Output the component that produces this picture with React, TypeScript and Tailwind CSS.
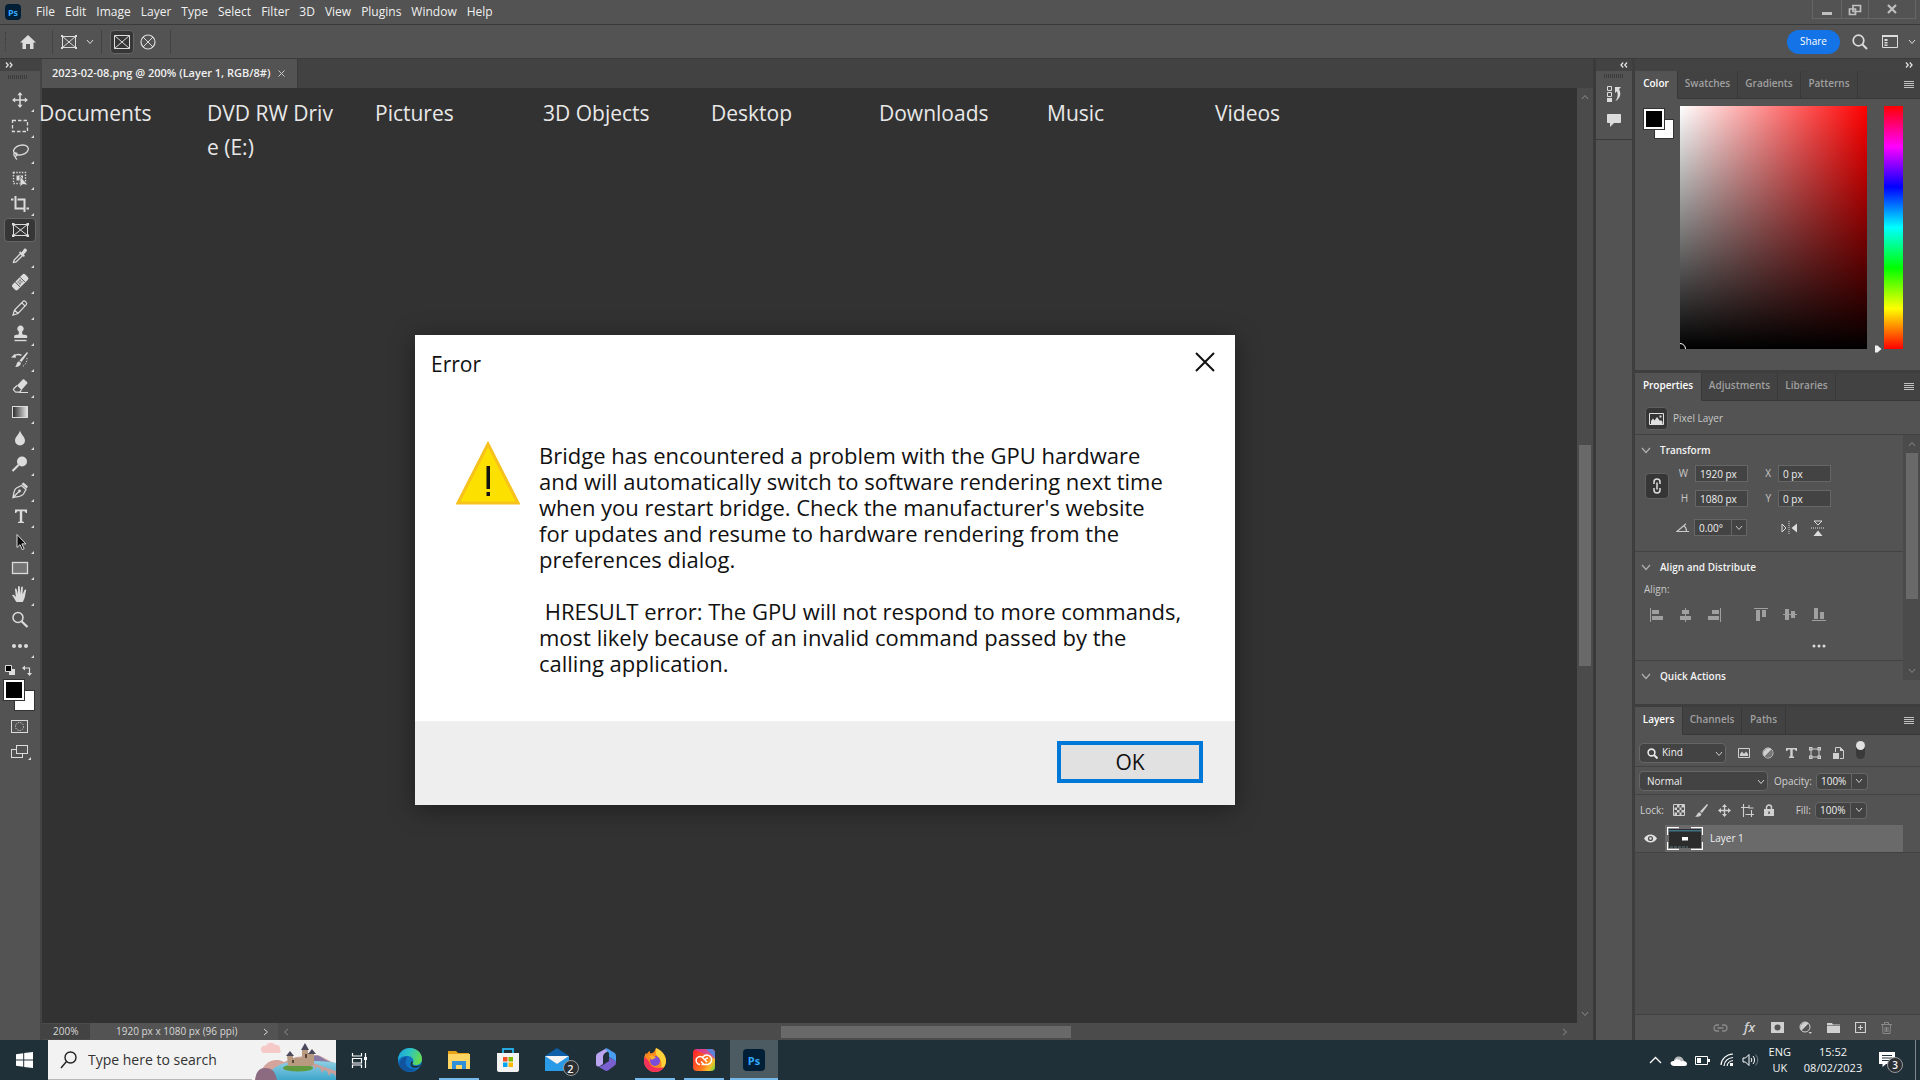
import React, { useState } from 'react';

type IconProps = { children: React.ReactNode; w?: number; h?: number; className?: string };

const Svg = ({ children, w = 20, h = 20, className = '' }: IconProps) => (
  <svg width={w} height={h} viewBox={`0 0 ${w} ${h}`} fill="none" className={`shrink-0 ${className}`} aria-hidden="true">
    {children}
  </svg>
);

const Chevron = ({ className = '' }: { className?: string }) => (
  <Svg w={8} h={6} className={className}>
    <path d="M1 1l3 3.5L7 1" stroke="currentColor" />
  </Svg>
);

const DoubleArrow = ({ flip = false }: { flip?: boolean }) => (
  <Svg w={8} h={6} className={flip ? 'rotate-180' : ''}>
    <path d="M1 .5L3.2 3 1 5.5M4.8.5L7 3 4.8 5.5" stroke="#e0e0e0" strokeWidth="1.3" />
  </Svg>
);

const FrameIcon = () => (
  <Svg w={18} h={16}>
    <path d="M2.5 2.5h13v11h-13zM2.5 2.5l13 11M15.5 2.5l-13 11" stroke="currentColor" />
    <path d="M1 1h2v2H1zM15 1h2v2h-2zM1 13h2v2H1zM15 13h2v2h-2z" fill="currentColor" />
  </Svg>
);

const Grip = () => (
  <div className="h-1 w-5 bg-[repeating-linear-gradient(90deg,#3c3c3c_0_1px,transparent_1px_2px)]" />
);

const tools: { name: string; noCorner?: boolean; icon: React.ReactNode }[] = [
  {
    name: 'Move',
    icon: (
      <>
        <path d="M10 3v14M3 10h14" stroke="currentColor" strokeWidth="1.5" />
        <path d="M10 2l2.600 3.200H7.400zM10 18l2.600-3.200H7.400zM2 10l3.200-2.600v5.200zM18 10l-3.200-2.600v5.200z" fill="currentColor" />
      </>
    ),
  },
  { name: 'Marquee', icon: <path d="M2.5 4.5h15v11h-15z" stroke="currentColor" strokeWidth="1.3" strokeDasharray="3.5 2" /> },
  {
    name: 'Lasso',
    icon: (
      <>
        <ellipse cx="11" cy="8" rx="7.5" ry="4.8" transform="rotate(-14 11 8)" stroke="currentColor" strokeWidth="1.3" />
        <circle cx="5.5" cy="12.5" r="1.7" stroke="currentColor" strokeWidth="1.2" />
        <path d="M5 14c.2 2 1 2.500 2 3.500" stroke="currentColor" strokeWidth="1.3" />
      </>
    ),
  },
  {
    name: 'Object Selection',
    icon: (
      <>
        <path d="M3.5 4.5h12v11h-12z" stroke="currentColor" strokeWidth="1.4" strokeDasharray="1.4 1.4" />
        <path d="M6.5 7.5H13v5H6.5z" fill="currentColor" />
        <path d="M10 8v11l2.500-2.500 5.500.5z" fill="currentColor" stroke="#535353" strokeWidth=".8" />
      </>
    ),
  },
  {
    name: 'Crop',
    icon: <path d="M5.5 2v12.500H14M1 5.500h2.500M7.500 5.500h7V18M16.500 14.500H19" stroke="currentColor" strokeWidth="2" />,
  },
  {
    name: 'Frame',
    noCorner: true,
    icon: (
      <>
        <path d="M3.5 4.500h14v11h-14zM3.500 4.500l14 11M17.500 4.500l-14 11" stroke="currentColor" />
        <path d="M2 3h2.500v2.500H2zM16.500 3H19v2.500h-2.500zM2 14.500h2.500V17H2zM16.500 14.500H19V17h-2.500z" fill="currentColor" />
      </>
    ),
  },
  {
    name: 'Eyedropper',
    icon: (
      <>
        <path d="M3.500 16.500l.6-2.500 6.500-6.500 2 2-6.500 6.500z" stroke="currentColor" strokeWidth="1.3" />
        <path d="M9 6.500l1.200-1.200 1.300 1.200L14 3c1.500-1.500 4 .8 2.500 2.500L13.800 8.500l1.200 1.300L13.800 11z" fill="currentColor" />
      </>
    ),
  },
  {
    name: 'Healing Brush',
    icon: (
      <>
        <rect x="1" y="6.5" width="18" height="7.5" rx="2" transform="rotate(-45 10 10)" fill="currentColor" />
        <path d="M5.200 10l4.800 4.800M10 5.200l4.800 4.800" stroke="#535353" />
        <path d="M10 7.500v1.400M12.500 10h-1.400M10 12.500v-1.400M7.500 10h1.400M10 9.600v.9" stroke="#535353" strokeWidth="1.2" />
      </>
    ),
  },
  {
    name: 'Pencil',
    icon: (
      <path d="M3 17l1.500-5L13.500 3c1-.8 4 2 3 3.300L8 15.500zM4.500 12L8 15.500M11.800 4.800l3.400 3.400" stroke="currentColor" strokeWidth="1.2" />
    ),
  },
  {
    name: 'Clone Stamp',
    icon: (
      <>
        <path d="M8.800 10V7.500a3.200 3.200 0 1 1 3.400 0V10c0 .8 5 .8 5 1.800V14h-13v-2.200c0-1 4.600-1 4.600-1.800z" fill="currentColor" />
        <path d="M4.500 16.500h12" stroke="currentColor" strokeWidth="1.4" />
      </>
    ),
  },
  {
    name: 'History Brush',
    icon: (
      <>
        <path d="M17 2l1 1-6.500 9-2-1.500zM9 11.200l2 1.800c-.5 3-3 4-6 4 2-1.500 1-4.500 4-5.800z" fill="currentColor" />
        <path d="M4 6c2.500-1.800 5-1.800 7.500-.6" stroke="currentColor" strokeWidth="1.4" />
        <path d="M1 7.500l4-3.700 1 4z" fill="currentColor" />
        <path d="M17 8c.4 3.500-1.500 7-4.500 8.500" stroke="currentColor" strokeDasharray="1.2 1.6" />
      </>
    ),
  },
  {
    name: 'Eraser',
    icon: (
      <>
        <path d="M7 9.500l5.500-5.800c.6-.6 1.400-.6 2 0l2.500 2.300c.6.600.6 1.200 0 1.800L11.500 14z" fill="currentColor" />
        <path d="M7 9.500l-3 3c-.7.7-.7 1.300 0 1.900l1.700 1.700h3.800l2-2.100M9 16.500h9" stroke="currentColor" strokeWidth="1.2" />
      </>
    ),
  },
  {
    name: 'Gradient',
    icon: (
      <>
        <defs>
          <linearGradient id="toolGradient">
            <stop stopColor="#2a2a2a" />
            <stop offset="1" stopColor="#e8e8e8" />
          </linearGradient>
        </defs>
        <rect x="2.5" y="4.5" width="15" height="11" fill="url(#toolGradient)" stroke="currentColor" />
      </>
    ),
  },
  { name: 'Blur', icon: <path d="M10 2.500c1 4 5 6.500 5 10a5 5 0 0 1-10 0c0-3.500 4-6 5-10z" fill="currentColor" /> },
  {
    name: 'Dodge',
    icon: (
      <>
        <circle cx="12" cy="7.5" r="5" fill="currentColor" />
        <path d="M8.500 11L2.500 17" stroke="currentColor" strokeWidth="2.2" />
      </>
    ),
  },
  {
    name: 'Pen',
    icon: (
      <>
        <path d="M3 17.500c1-4 .5-7.500 3.500-9.500l5-2.500 4.500 4-2.500 4.500c-2 3-6.500 2.500-10.500 3.500zM3.500 17l5.500-5.500" stroke="currentColor" strokeWidth="1.3" />
        <circle cx="9.5" cy="11" r="1.4" fill="currentColor" />
        <path d="M11.500 4l2-1.500 4.500 4-1.500 2z" fill="currentColor" />
      </>
    ),
  },
  {
    name: 'Type',
    icon: <path d="M5 3.500h12V7h-1.300c-.3-1.200-.8-1.700-2.200-1.700h-1.300v9.400c0 .9.500 1.100 1.800 1.200v1.100H8v-1.100c1.300-.1 1.800-.3 1.800-1.200V5.300H8.500C7.100 5.300 6.600 5.800 6.300 7H5z" fill="currentColor" />,
  },
  {
    name: 'Path Selection',
    icon: <path d="M7 2.500v13l3-2.800 2.300 5 1.900-1-2.300-4.800h4z" fill="#0d0d0d" stroke="currentColor" />,
  },
  { name: 'Rectangle', icon: <rect x="2.5" y="4.5" width="15" height="11" fill="#757575" stroke="currentColor" strokeWidth="1.3" /> },
  {
    name: 'Hand',
    icon: (
      <path
        d="M6.500 18C5 16 3.500 13 2 11.200c.8-1 2-.6 3 .8l.9 1L5 5.500c-.1-1.200 1.500-1.300 1.700-.1L7.800 10 8 3c0-1.200 1.700-1.200 1.800 0l.4 7 1-6.700c.2-1.200 1.800-1 1.700.2L12.500 10.500l2-4.500c.5-1 2-.5 1.600.6-1 3.400-.8 7-2.600 10l-.7 1.400z"
        fill="currentColor"
      />
    ),
  },
  {
    name: 'Zoom',
    noCorner: true,
    icon: (
      <>
        <circle cx="8" cy="7.5" r="5" stroke="currentColor" strokeWidth="1.5" />
        <path d="M11.800 11.500l5.700 5.500" stroke="currentColor" strokeWidth="2.3" />
      </>
    ),
  },
  {
    name: 'More Tools',
    icon: (
      <>
        <circle cx="4" cy="10" r="2" fill="currentColor" />
        <circle cx="10" cy="10" r="2" fill="currentColor" />
        <circle cx="16" cy="10" r="2" fill="currentColor" />
      </>
    ),
  },
];

const Toolbar = () => {
  const [active, setActive] = useState('Frame');

  return (
    <aside className="flex w-[42px] shrink-0 flex-col border-r-2 border-[#434343] bg-[#535353] text-[#dcdcdc]">
      <div className="flex h-3 items-center bg-[#434343] pl-[5px]">
        <DoubleArrow />
      </div>
      <div className="flex h-[17px] items-start pt-1 pl-2">
        <Grip />
      </div>
      <div className="flex flex-col items-center gap-0.5">
        {tools.map((tool) => (
          <button
            key={tool.name}
            aria-label={tool.name}
            onClick={() => setActive(tool.name)}
            className={`relative flex h-6 w-8 items-center justify-center rounded-sm border ${
              active === tool.name ? 'border-[#666] bg-[#363636]' : 'border-transparent'
            }`}
          >
            <Svg>{tool.icon}</Svg>
            {!tool.noCorner && (
              <Svg w={3} h={3} className="absolute right-px -bottom-px">
                <path d="M3 0v3H0z" fill="currentColor" />
              </Svg>
            )}
          </button>
        ))}
      </div>
      <div className="flex justify-between pt-[7px] pr-[7px] pl-[5px]">
        <Svg w={11} h={11}>
          <path d="M4 4h6v6H4z" fill="#dcdcdc" />
          <path d="M.5.5h6v6h-6z" fill="#000" stroke="#dcdcdc" />
        </Svg>
        <Svg w={11} h={11}>
          <path d="M2 3h5.500v6" stroke="#dcdcdc" strokeWidth="1.2" />
          <path d="M0 3l3-2.500v5zM7.500 11L5 8h5z" fill="#dcdcdc" />
        </Svg>
      </div>
      <div className="relative mt-1 ml-1 h-[31px] w-[31px]">
        <button aria-label="Background color" className="absolute right-0 bottom-0 h-[21px] w-[21px] border border-[#333] bg-white" />
        <button aria-label="Foreground color" className="absolute top-0 left-0 h-5 w-5 border-2 border-white bg-black outline outline-[#333]" />
      </div>
      <button aria-label="Quick mask" className="mt-1.5 ml-2.5">
        <Svg w={20} h={18}>
          <rect x="1.5" y="3.5" width="16" height="12" stroke="currentColor" />
          <circle cx="9.5" cy="9.5" r="4" stroke="currentColor" strokeDasharray="1.2 1.2" />
        </Svg>
      </button>
      <button aria-label="Screen mode" className="mt-2 ml-2.5">
        <Svg w={22} h={20}>
          <rect x="1.5" y="6.5" width="11" height="8" stroke="currentColor" />
          <rect x="6.5" y="2.5" width="11" height="8" fill="#535353" stroke="currentColor" />
          <path d="M21 14v3h-3z" fill="currentColor" />
        </Svg>
      </button>
    </aside>
  );
};

const menus = ['File', 'Edit', 'Image', 'Layer', 'Type', 'Select', 'Filter', '3D', 'View', 'Plugins', 'Window', 'Help'];

const TitleBar = () => (
  <header className="flex h-[25px] items-start border-b border-[#3a3a3a] bg-[#535353]">
    <div className="mt-1 ml-[5px] flex h-4 w-4 items-center justify-center rounded-sm bg-[#001e36] text-[9px] leading-none font-bold text-[#31a8ff]">Ps</div>
    <nav className="ml-[15px] flex h-6 flex-1 items-center gap-2.5 text-xs text-[#f0f0f0]">
      {menus.map((m) => (
        <button key={m}>{m}</button>
      ))}
    </nav>
    <div className="mr-1 flex h-[19px] border border-t-0 border-[#666] text-[#c0c0c0]">
      <button aria-label="Minimize" className="flex w-7 items-center justify-center">
        <Svg w={12} h={14}><path d="M1 10h10v3H1z" fill="currentColor" /></Svg>
      </button>
      <button aria-label="Restore" className="flex w-7 items-center justify-center border-x border-[#666] pt-0.5">
        <Svg w={14} h={12}>
          <path d="M5 1.500h7.500v6H5zM1.500 5h6v5.500h-6z" fill="#535353" stroke="currentColor" strokeWidth="1.7" />
        </Svg>
      </button>
      <button aria-label="Close" className="flex w-[46px] items-center justify-center">
        <Svg w={10} h={10}><path d="M1 1l8 8M9 1L1 9" stroke="currentColor" strokeWidth="2.2" /></Svg>
      </button>
    </div>
  </header>
);

const OptionsBar = () => (
  <div className="flex h-[34px] items-center border-b border-[#3a3a3a] bg-[#535353] text-[#dcdcdc]">
    <div className="ml-[5px] h-5 w-px border-l border-dotted border-[#3a3a3a]" />
    <button aria-label="Home" className="mr-3 ml-2.5 flex w-6 justify-center">
      <Svg w={18} h={16}><path d="M9 1l8 7.500h-2.500V15H11v-5H7v5H3.500V8.500H1z" fill="currentColor" /></Svg>
    </button>
    <div className="h-6 w-px bg-[#434343]" />
    <button aria-label="Tool preset" className="flex w-12 items-center justify-center gap-2">
      <FrameIcon />
      <Chevron />
    </button>
    <div className="h-6 w-px bg-[#434343]" />
    <button aria-label="Rectangular frame" className="ml-2 flex h-6 w-6 items-center justify-center rounded-sm border border-[#666] bg-[#363636]">
      <Svg w={16} h={14}><path d="M.5.5h15v13H.5zM.5.5l15 13M15.500.5l-15 13" stroke="currentColor" /></Svg>
    </button>
    <button aria-label="Elliptical frame" className="ml-1.5">
      <Svg w={16} h={16}>
        <circle cx="8" cy="8" r="7" stroke="currentColor" strokeWidth="1.2" />
        <path d="M3 3l10 10M13 3L3 13" stroke="currentColor" />
      </Svg>
    </button>
    <div className="ml-3.5 h-6 w-px bg-[#434343]" />
    <div className="flex-1" />
    <button className="h-6 w-[53px] rounded-full bg-[#1473e6] text-[10px] text-white">Share</button>
    <button aria-label="Search" className="ml-3">
      <Svg w={16} h={16}>
        <circle cx="6.5" cy="6.5" r="5.3" stroke="currentColor" strokeWidth="1.7" />
        <path d="M10.500 10.500l4.500 4.500" stroke="currentColor" strokeWidth="2" />
      </Svg>
    </button>
    <button aria-label="Workspace" className="ml-3.5 flex items-center gap-2.5 pr-1">
      <Svg w={16} h={13}>
        <path d="M.5 1h15v11.500H.5z" stroke="currentColor" />
        <path d="M0 0h16v2H0zM2.500 4h3v2h-3zM2.500 7h3v1.500h-3zM2.500 9.500h3V11h-3z" fill="currentColor" />
      </Svg>
      <Chevron />
    </button>
  </div>
);

const folders = ['Documents', 'DVD RW Driv\ne (E:)', 'Pictures', '3D Objects', 'Desktop', 'Downloads', 'Music', 'Videos'];

const ErrorDialog = () => (
  <section role="dialog" aria-label="Error" className="mt-[171px] ml-[373px] w-[820px] bg-white text-[21px] text-[#111] shadow-[0_4px_24px_rgba(0,0,0,0.4)]">
    <div className="flex h-[104px] items-start justify-between pt-3.5 pr-[18px] pl-4">
      <h1 className="leading-[30px]">Error</h1>
      <button aria-label="Close dialog" className="p-0.5">
        <Svg w={20} h={22}><path d="M1 2l18 18M19 2L1 20" stroke="#111" strokeWidth="2" /></Svg>
      </button>
    </div>
    <div className="flex h-[282px] gap-[19px] pl-[41px]">
      <Svg w={64} h={66} className="mt-0.5">
        <path d="M32 3L62 62H2z" fill="#fce100" stroke="#f8c21c" strokeWidth="3" />
        <path d="M30.500 25h3.500v23h-3.500zM30.500 51h3.500v4h-3.500z" fill="#111" />
      </Svg>
      <p className="mt-[3px] text-[22px] leading-[26px] whitespace-pre">
        {`Bridge has encountered a problem with the GPU hardware
and will automatically switch to software rendering next time
when you restart bridge. Check the manufacturer's website
for updates and resume to hardware rendering from the
preferences dialog.

 HRESULT error: The GPU will not respond to more commands,
most likely because of an invalid command passed by the
calling application.`}
      </p>
    </div>
    <div className="flex h-[84px] items-start justify-end bg-[#eee] pt-5 pr-8">
      <button className="h-[42px] w-[146px] border-4 border-[#0078d7] bg-[#e1e1e1] pt-0.5">OK</button>
    </div>
  </section>
);

const Document = () => (
  <main className="flex min-w-0 flex-1 flex-col border-r-[3px] border-[#3a3a3a] bg-[#323232]">
    <div className="flex h-[29px] shrink-0 bg-[#424242]">
      <div className="flex items-center gap-2 border-r border-[#3a3a3a] bg-[#535353] pr-3 pl-2.5">
        <span className="text-[11px] font-semibold whitespace-nowrap text-[#f0f0f0]">2023-02-08.png @ 200% (Layer 1, RGB/8#)</span>
        <button aria-label="Close tab">
          <Svg w={7} h={7}><path d="M.5.5l6 6M6.500.5l-6 6" stroke="#c8c8c8" /></Svg>
        </button>
      </div>
    </div>
    <div className="flex min-h-0 flex-1">
      <div className="min-w-0 flex-1 pt-2">
        <ul className="-ml-[3px] flex h-[68px] text-[21px] leading-[34px] text-[#e8e8e8]">
          {folders.map((f) => (
            <li key={f} className="w-[168px] shrink-0 whitespace-pre">{f}</li>
          ))}
        </ul>
        <ErrorDialog />
      </div>
      <div className="flex w-4 flex-col items-center justify-between bg-[#4b4b4b] py-1.5 text-[#8a8a8a]">
        <Chevron className="rotate-180" />
        <div className="h-[221px] w-3 bg-[#696969]" />
        <Chevron />
      </div>
    </div>
    <div className="flex h-[17px] shrink-0 items-center bg-[#4b4b4b] text-[10px] text-[#d8d8d8]">
      <span className="w-12 bg-[#434343] pl-[11px]">200%</span>
      <span className="flex h-full w-[188px] items-center justify-between bg-[#535353] pr-2 pl-[26px]">
        1920 px x 1080 px (96 ppi)
        <Chevron className="-rotate-90" />
      </span>
      <Chevron className="ml-1 rotate-90 text-[#8a8a8a]" />
      <div className="flex h-full flex-1 items-center justify-center">
        <div className="h-3 w-[290px] bg-[#696969]" />
      </div>
      <Chevron className="mr-6 -rotate-90 text-[#8a8a8a]" />
    </div>
  </main>
);

const PanelTabs = ({ tabs, widths }: { tabs: string[]; widths: string[] }) => (
  <div className="flex h-7 shrink-0 bg-[#424242] text-[10px] font-semibold text-[#a0a0a0]">
    {tabs.map((t, i) => (
      <button
        key={t}
        className={`${widths[i]} flex items-center justify-center border-r border-b border-r-[#383838] pb-0.5 ${
          i === 0 ? 'border-b-[#535353] bg-[#535353] text-white' : 'border-b-[#383838]'
        }`}
      >
        {t}
      </button>
    ))}
    <div className="flex flex-1 items-center justify-end border-b border-[#383838] pr-1.5">
      <button aria-label={`${tabs[0]} panel menu`}>
        <Svg w={10} h={8}><path d="M0 .5h10M0 2.500h10M0 4.500h10M0 6.500h10" stroke="#c0c0c0" /></Svg>
      </button>
    </div>
  </div>
);

const ColorPanel = () => (
  <section className="flex h-[299px] shrink-0 flex-col">
    <PanelTabs tabs={['Color', 'Swatches', 'Gradients', 'Patterns']} widths={['w-[43px]', 'w-[60px]', 'w-[63px]', 'w-[57px]']} />
    <div className="flex pt-[7px] pl-[9px]">
      <div className="relative mt-[3px] h-[30px] w-[30px]">
        <button aria-label="Background swatch" className="absolute right-0 bottom-0 h-5 w-5 border border-[#333] bg-white" />
        <button aria-label="Foreground swatch" className="absolute top-0 left-0 h-5 w-5 border-2 border-white bg-black outline outline-[#333]" />
      </div>
      <div className="relative ml-[6px] h-[243px] w-[187px] overflow-hidden bg-[linear-gradient(to_top,#000,transparent),linear-gradient(to_right,#fff,#f00)]">
        <div className="absolute -bottom-1.5 -left-1.5 h-3 w-3 rounded-full border border-white" />
      </div>
      <div className="flex items-end pl-[7px]">
        <Svg w={8} h={8} className="-mb-1"><path d="M1 .5h2.500L7.500 4 3.500 7.500H1z" fill="#f0f0f0" /></Svg>
        <div className="ml-0.5 h-[243px] w-[19px] bg-[linear-gradient(#f00,#f0f,#00f,#0ff,#0f0,#ff0,#f00)]" />
      </div>
    </div>
  </section>
);

const Field = ({ label, value }: { label: string; value: string }) => (
  <label className="flex items-center justify-end gap-[7px]">
    {label}
    <input defaultValue={value} className="h-[17px] w-[53px] border border-[#666] bg-[#434343] pl-1 text-[#f0f0f0]" />
  </label>
);

const PercentField = ({ label, value, id }: { label: string; value: string; id: string }) => (
  <div className="flex items-center">
    <label htmlFor={id} className="pr-1">{label}</label>
    <input id={id} defaultValue={value} className="h-[17px] w-9 rounded-l-sm border border-[#666] bg-[#434343] pl-1 text-[#f0f0f0]" />
    <button aria-label={`${label} presets`} className="flex h-[17px] w-4 items-center justify-center rounded-r-sm border border-l-0 border-[#666] bg-[#434343]">
      <Chevron />
    </button>
  </div>
);

const SectionTitle = ({ children }: { children: React.ReactNode }) => (
  <h2 className="flex h-[30px] items-center gap-[9px] pl-[6px] font-semibold text-[#f4f4f4]">
    <Svg w={10} h={7} className="text-[#b0b0b0]"><path d="M1 1l4 4.500L9 1" stroke="currentColor" strokeWidth="1.2" /></Svg>
    {children}
  </h2>
);

const alignIcons = [
  'M0 0h1v14H0zM2 2h7v4H2zM2 8h11v4H2z',
  'M6 0h1v14H6zM3 2h7v4H3zM1 8h11v4H1z',
  'M12 0h1v14h-1zM4 2h7v4H4zM0 8h11v4H0z',
  'M0 0h14v1H0zM2 2h4v11H2zM8 2h4v7H8z',
  'M0 6h14v1H0zM2 1h4v11H2zM8 3h4v7H8z',
  'M0 12h14v1H0zM2 0h4v11H2zM8 4h4v7H8z',
];

const PropertiesPanel = () => (
  <section className="flex h-[334px] shrink-0 flex-col border-t-[3px] border-[#3e3e3e] text-[10px] text-[#c8c8c8]">
    <PanelTabs tabs={['Properties', 'Adjustments', 'Libraries']} widths={['w-[67px]', 'w-[76px]', 'w-[58px]']} />
    <div className="flex h-[34px] shrink-0 items-center gap-[5px] border-b border-[#414141] pt-0.5 pl-2.5">
      <span className="flex h-[23px] w-[23px] items-center justify-center rounded-sm border border-[#606060] bg-[#363636]">
        <Svg w={15} h={12}>
          <path d="M.5.5h14v11H.5z" stroke="#e0e0e0" />
          <path d="M2 11V8l2-2.500 1.500 2L8 4l3 4 1-1 1.500 2v2z" fill="#e0e0e0" />
          <path d="M10.500 2.500h2v2h-2z" fill="#e0e0e0" />
        </Svg>
      </span>
      Pixel Layer
    </div>
    <div className="flex min-h-0 flex-1">
      <div className="flex-1">
        <div className="h-[117px] border-b border-[#434343]">
          <SectionTitle>Transform</SectionTitle>
          <div className="flex">
            <button aria-label="Link dimensions" className="mt-2 ml-2.5 flex h-[26px] w-6 items-center justify-center rounded-sm border border-[#606060] bg-[#363636]">
              <Svg w={10} h={16}>
                <path d="M2 6V4a3 3 0 0 1 6 0v2M2 10v2a3 3 0 0 0 6 0v-2M5 4.500v7" stroke="#e0e0e0" strokeWidth="1.5" />
              </Svg>
            </button>
            <div className="w-[79px] space-y-2">
              <Field label="W" value="1920 px" />
              <Field label="H" value="1080 px" />
            </div>
            <div className="w-[83px] space-y-2">
              <Field label="X" value="0 px" />
              <Field label="Y" value="0 px" />
            </div>
          </div>
          <div className="mt-3 flex items-center pl-[41px]">
            <Svg w={14} h={9}><path d="M13 8.500H1L10 .8M8 3c1.800 1 2.500 3 2.500 5.500" stroke="currentColor" strokeWidth="1.2" /></Svg>
            <input aria-label="Angle" defaultValue="0.00°" className="ml-1 h-[17px] w-[38px] border border-[#666] bg-[#434343] pl-1 text-[#f0f0f0]" />
            <button aria-label="Angle presets" className="flex h-[17px] w-[15px] items-center justify-center border border-l-0 border-[#666] bg-[#434343]">
              <Chevron />
            </button>
            <button aria-label="Flip horizontal" className="ml-[34px]">
              <Svg w={16} h={14}>
                <path d="M1 3l4 4-4 4z" stroke="#dcdcdc" />
                <path d="M8 0v14" stroke="#dcdcdc" strokeDasharray="1 1" />
                <path d="M16 2.500v9L10.500 7z" fill="#dcdcdc" />
              </Svg>
            </button>
            <button aria-label="Flip vertical" className="ml-3.5">
              <Svg w={14} h={16}>
                <path d="M3 1h8L7 5z" stroke="#dcdcdc" />
                <path d="M0 8h14" stroke="#dcdcdc" strokeDasharray="1 1" />
                <path d="M2.500 16h9L7 10.500z" fill="#dcdcdc" />
              </Svg>
            </button>
          </div>
        </div>
        <div className="h-[109px] border-b border-[#434343]">
          <SectionTitle>Align and Distribute</SectionTitle>
          <p className="pl-[9px] leading-[14px]">Align:</p>
          <div className="mt-3 flex gap-[15px] pl-[15px] text-[#a0a0a0]">
            {alignIcons.map((d, i) => (
              <button key={d} aria-label={`Align ${i + 1}`} className={i === 3 ? 'ml-[17px]' : ''}>
                <Svg w={14} h={14}><path d={d} fill="currentColor" /></Svg>
              </button>
            ))}
          </div>
          <button aria-label="More align options" className="mt-[22px] ml-[177px] block">
            <Svg w={14} h={4}>
              <circle cx="2" cy="2" r="1.5" fill="#dcdcdc" />
              <circle cx="7" cy="2" r="1.5" fill="#dcdcdc" />
              <circle cx="12" cy="2" r="1.5" fill="#dcdcdc" />
            </Svg>
          </button>
        </div>
        <SectionTitle>Quick Actions</SectionTitle>
      </div>
      <div className="mb-6 flex w-[17px] flex-col items-center bg-[#4b4b4b] py-1.5 text-[#8a8a8a]">
        <Chevron className="rotate-180" />
        <div className="mt-1.5 mb-auto h-[146px] w-3 bg-[#696969]" />
        <Chevron />
      </div>
    </div>
  </section>
);

const LayersPanel = () => {
  const [visible, setVisible] = useState(true);

  return (
    <section className="flex min-h-0 flex-1 flex-col border-t-[3px] border-[#3e3e3e] text-[10px] text-[#d0d0d0]">
      <PanelTabs tabs={['Layers', 'Channels', 'Paths']} widths={['w-[48px]', 'w-[59px]', 'w-[44px]']} />
      <div className="flex h-8 shrink-0 items-center border-b border-[#434343] pt-1 pl-1">
        <div className="relative">
          <select aria-label="Filter type" className="h-5 w-[87px] appearance-none rounded-sm border border-[#666] bg-[#434343] pl-[22px] text-[#f0f0f0]">
            <option>Kind</option>
          </select>
          <Svg w={11} h={11} className="pointer-events-none absolute top-[5px] left-2">
            <circle cx="4.5" cy="4.5" r="3.4" stroke="#e8e8e8" strokeWidth="1.6" />
            <path d="M7 7l3.500 3.500" stroke="#e8e8e8" strokeWidth="2" />
          </Svg>
          <Chevron className="pointer-events-none absolute top-2 right-[3px]" />
        </div>
        <div className="ml-3 flex items-center gap-3">
          <Svg w={12} h={10}>
            <path d="M.5.5h11v9H.5z" stroke="currentColor" />
            <path d="M2 8V6l2-2.500L6 6l2-2.500L10 6v2z" fill="currentColor" />
          </Svg>
          <Svg w={12} h={12}>
            <circle cx="6" cy="6" r="5" stroke="currentColor" />
            <path d="M9.500 2.500a5 5 0 0 1-7 7z" fill="#777" />
            <path d="M2.500 9.500a5 5 0 0 1 7-7z" fill="currentColor" />
          </Svg>
          <Svg w={11} h={10}><path d="M0 0h11v3H9.800L9 1.600H6.700V8.500H8V10H3V8.500h1.300V1.600H2L1.200 3H0z" fill="currentColor" /></Svg>
          <Svg w={12} h={12}>
            <path d="M2 2h8v8H2z" stroke="currentColor" />
            <path d="M0 0h3.500v3.500H0zM8.500 0H12v3.500H8.500zM0 8.500h3.500V12H0zM8.500 8.500H12V12H8.500z" fill="currentColor" />
            <path d="M1.300 1.300h1v1h-1zM9.700 1.300h1v1h-1zM1.300 9.700h1v1h-1zM9.700 9.700h1v1h-1z" fill="#535353" />
          </Svg>
          <Svg w={11} h={12}>
            <path d="M2.500 5V.5h5l3 3v8H7" stroke="currentColor" />
            <path d="M7 0v4h4zM0 6h6v6H0z" fill="currentColor" />
          </Svg>
          <button aria-label="Toggle filter" className="-mt-1.5 flex h-[18px] w-[9px] items-start rounded-full bg-[#3a3a3a]">
            <span className="block h-[9px] w-[9px] rounded-full bg-[#e0e0e0]" />
          </button>
        </div>
      </div>
      <div className="flex h-7 shrink-0 items-center border-b border-[#434343] pt-px pl-1">
        <div className="relative mr-[6px]">
          <select aria-label="Blend mode" className="h-5 w-[129px] appearance-none rounded-sm border border-[#666] bg-[#434343] pl-[7px] text-[#f0f0f0]">
            <option>Normal</option>
          </select>
          <Chevron className="pointer-events-none absolute top-2 right-[3px]" />
        </div>
        <PercentField id="opacity" label="Opacity:" value="100%" />
      </div>
      <div className="flex h-[30px] shrink-0 items-center pl-[5px]">
        <span className="w-[33px]">Lock:</span>
        <div className="flex flex-1 items-center gap-[10px]">
          <Svg w={12} h={12}>
            <path d="M.5.5h11v11H.5z" stroke="currentColor" />
            <path d="M4 1h2.500v2.500H4zM8.500 1H11v2.500H8.500zM1.500 3.500H4V6H1.500zM6.500 3.500h2V6h-2zM4 6h2.500v2.500H4zM8.500 6H11v2.500H8.500zM1.500 8.500H4V11H1.500zM6.500 8.500h2V11h-2z" fill="currentColor" />
          </Svg>
          <Svg w={13} h={13}><path d="M12 0l1 1-6 8-2-1.500zM4.500 8.300l2 1.600C6 12.500 3 13 0 12.800c2-.8 2-4 4.500-4.500z" fill="currentColor" /></Svg>
          <Svg w={13} h={13}>
            <path d="M6.500 2v9M2 6.500h9" stroke="currentColor" strokeWidth="1.3" />
            <path d="M6.500 0L9 3H4zM6.500 13L9 10H4zM0 6.500L3 4v5zM13 6.500L10 4v5z" fill="currentColor" />
          </Svg>
          <Svg w={13} h={13}><path d="M2.500 0v13M0 3.500h8M4.500 10.500H13M10.500 13V6M8 1v3h4.500" stroke="currentColor" strokeWidth="1.1" /></Svg>
          <Svg w={10} h={12}>
            <path d="M2.500 6V3.500a2.500 2.500 0 0 1 5 0V6" stroke="currentColor" strokeWidth="1.5" />
            <path d="M0 5h10v7H0z" fill="currentColor" />
            <path d="M4.300 7.500h1.500V10H4.300z" fill="#535353" />
          </Svg>
        </div>
        <div className="mr-[53px]">
          <PercentField id="fill" label="Fill:" value="100%" />
        </div>
      </div>
      <div className="flex flex-1 flex-col bg-[#4d4d4d]">
        <div className="flex h-7 items-center border-b border-[#414141] bg-[#535353]">
          <button aria-label="Toggle visibility" onClick={() => setVisible(!visible)} className="flex w-[30px] justify-center">
            {visible && (
              <Svg w={13} h={9}>
                <path d="M0 4.500C3-.8 10-.8 13 4.500c-3 5.300-10 5.300-13 0z" fill="#e0e0e0" />
                <circle cx="6.5" cy="4.5" r="2.6" fill="#535353" />
                <circle cx="6.5" cy="4.5" r="1.2" fill="#e0e0e0" />
              </Svg>
            )}
          </button>
          <div className="mr-[17px] flex h-full flex-1 items-center gap-[7px] bg-[#6a6a6a] pl-0.5 text-[#f0f0f0]">
            <Svg w={36} h={23}>
              <path d="M2 2h32v19H2z" fill="#2c2c2c" />
              <path d="M2 3h32v1.500H2z" fill="#3d7384" />
              <path d="M15 10h6v3.500h-6z" fill="#fff" />
              <path d="M3 20h18" stroke="#5d7780" strokeDasharray="3 1" />
              <path d="M.5 8V.5H12M24 .5h11.500V8M35.500 15v7.500H24M12 22.500H.5V15" stroke="#fff" strokeWidth="1.3" />
            </Svg>
            Layer 1
          </div>
        </div>
      </div>
      <div className="flex h-[26px] shrink-0 items-center justify-end gap-[15px] border-t border-[#414141] pr-7">
        <button aria-label="Link layers">
          <Svg w={15} h={8} className="text-[#8a8a8a]"><path d="M6 1H4a3 3 0 0 0 0 6h2M9 1h2a3 3 0 0 1 0 6H9M4.500 4h6" stroke="currentColor" strokeWidth="1.3" /></Svg>
        </button>
        <button aria-label="Layer style" className="w-[13px] text-[13px] leading-none font-semibold italic">fx</button>
        <button aria-label="Add mask">
          <Svg w={13} h={11}><path d="M0 0h13v11H0z" fill="currentColor" /><circle cx="6.5" cy="5.5" r="3" fill="#535353" /></Svg>
        </button>
        <button aria-label="Adjustment layer">
          <Svg w={13} h={13}>
            <circle cx="6" cy="6" r="5" stroke="currentColor" />
            <path d="M2.500 9.500a5 5 0 0 1 7-7z" fill="currentColor" />
            <path d="M9.500 11H13l-1.800 2z" fill="currentColor" />
          </Svg>
        </button>
        <button aria-label="New group">
          <Svg w={13} h={10}><path d="M0 0h5l1 1.500h7V10H0z" fill="currentColor" /><path d="M0 2.500h13" stroke="#535353" strokeWidth=".6" /></Svg>
        </button>
        <button aria-label="New layer">
          <Svg w={11} h={11}><path d="M.5.5h10v10H.5zM5.500 3v5M3 5.500h5" stroke="currentColor" strokeWidth="1.2" /></Svg>
        </button>
        <button aria-label="Delete layer">
          <Svg w={11} h={12} className="text-[#8a8a8a]"><path d="M0 2.500h11M3.500 2.500v-2h4v2M1.500 2.500l.5 9h7l.5-9M4 5v5M5.500 5v5M7 5v5" stroke="currentColor" /></Svg>
        </button>
      </div>
    </section>
  );
};

const RightDock = () => (
  <div className="flex shrink-0">
    <div className="flex w-[39px] flex-col border-r-[3px] border-[#3e3e3e] bg-[#535353]">
      <div className="flex h-3 items-center justify-end bg-[#434343] pr-1"><DoubleArrow flip /></div>
      <div className="flex h-[69px] flex-col items-center gap-[11px] border-b border-[#3a3a3a] pt-[3px] text-[#dcdcdc]">
        <Grip />
        <button aria-label="History" className="-mt-1">
          <Svg w={16} h={18}>
            <path d="M1.500 1.500h4v4h-4zM1.500 7.500h4v4h-4z" stroke="currentColor" />
            <path d="M1 13h5v4H1z" fill="currentColor" />
            <path d="M9 8V2h6L13 4.200c2.500 4 1.500 9-3.500 11.800 2.300-3.500 2.800-6.500 1.500-9.800z" fill="currentColor" />
          </Svg>
        </button>
        <button aria-label="Comments">
          <Svg w={14} h={13}><path d="M1 0h12c.6 0 1 .4 1 1v7c0 .6-.4 1-1 1H7l-4 4V9H1c-.6 0-1-.4-1-1V1c0-.6.4-1 1-1z" fill="currentColor" /></Svg>
        </button>
      </div>
    </div>
    <div className="flex w-[285px] flex-col bg-[#535353]">
      <div className="flex h-3 items-center justify-end bg-[#434343] pr-[7px]"><DoubleArrow /></div>
      <ColorPanel />
      <PropertiesPanel />
      <LayersPanel />
    </div>
  </div>
);

const taskbarApps = [
  {
    name: 'Task View',
    state: '',
    icon: (
      <>
        <path d="M3.500 5v3h9V5M3.500 20v-3h9v3M3.500 10.500h9V15h-9zM16.500 5v15" stroke="#fff" strokeWidth="1.2" />
        <path d="M15 9h3v3h-3z" fill="#fff" />
      </>
    ),
  },
  {
    name: 'Edge',
    state: '',
    icon: (
      <>
        <defs>
          <linearGradient id="edgeTop" x1="0" y1="0" x2="1" y2=".3">
            <stop stopColor="#1a9fe0" />
            <stop offset=".5" stopColor="#2cc3c4" />
            <stop offset="1" stopColor="#62d957" />
          </linearGradient>
        </defs>
        <circle cx="12" cy="12" r="12" fill="#1173c4" />
        <path d="M0 11C1 3 7 0 12 0c7 0 12 5 12 11 0 4-3 6-6.500 6-2.500 0-3.500-1-2.500-2.500 1.500-2-.5-6.500-5.500-6.500C5 8 1.500 9 0 13z" fill="url(#edgeTop)" />
        <path d="M8 12c-2 5 3 10 10 9-6 5-14.500 2-16.500-4C1 12 5 8.500 9.500 8.500 8.700 9.500 8.300 11 8 12z" fill="#0f549c" />
        <path d="M15 14.500c-1.500 1.500-.5 3.500 2.500 3.500 2 0 4-.5 5.500-1.500-1 2-4 4-8 3-3-1-3-5-1-6.500z" fill="#1f3038" />
      </>
    ),
  },
  {
    name: 'File Explorer',
    state: 'border-b-[#76b9ed]',
    icon: (
      <>
        <path d="M1 3h8l2 2h11v4H1z" fill="#e8a317" />
        <path d="M1 6h22v15H1z" fill="#ffd563" />
        <path d="M5 13h14v8h-4v-4H9v4H5z" fill="#2f8fd8" />
      </>
    ),
  },
  {
    name: 'Store',
    state: '',
    icon: (
      <>
        <path d="M7 5V1h10v4" stroke="#26a9e0" strokeWidth="2" />
        <path d="M1 5h22v17c0 1-1 2-2 2H3c-1 0-2-1-2-2z" fill="#f3f3f3" />
        <path d="M7 9h4.500v4.500H7z" fill="#f25022" />
        <path d="M12.500 9H17v4.500h-4.500z" fill="#7fba00" />
        <path d="M7 14.500h4.500V19H7z" fill="#00a4ef" />
        <path d="M12.500 14.500H17V19h-4.500z" fill="#ffb900" />
      </>
    ),
  },
  {
    name: 'Mail',
    state: '',
    badge: '2',
    icon: (
      <>
        <path d="M0 8l12-8 12 8v15H0z" fill="#0f5ea8" />
        <path d="M0 8l12 8 12-8v15H0z" fill="#2a9be6" />
        <path d="M0 8h24l-12 8z" fill="#f4f4f4" />
      </>
    ),
  },
  {
    name: 'Microsoft 365',
    state: '',
    icon: (
      <>
        <path d="M12 .5L4 5C2.500 6 2 7 2 8.500V16c0 2.500 2 3 4 2l3-2V9c0-2 .8-3 2-4l5-3z" fill="#b9a5f0" />
        <path d="M11 1c1-.6 2-.6 3 0l6 3.500c1.500 1 2 2 2 3.500v8c0-2-.5-3-2-4l-5-3V5z" fill="#4a9df0" />
        <path d="M22 14c0 2-.5 3-2 4l-6 4.500c-1 .6-2 .6-3 0L4 18.500c3 0 4-1 5-1.500l6-4v-3.500l5 2.500c1.500 1 2 1.500 2 2z" fill="#7a5fd0" />
      </>
    ),
  },
  {
    name: 'Firefox',
    state: 'border-b-[#76b9ed]',
    icon: (
      <>
        <path d="M3 5l1 1c1-2 2-3 3-3-.3 1.500 0 2 1 2.500C10 5 12 3.500 13 0c5 2 10 7 10 13 0 6-5 11-11 11S1 19 1 13c0-3 .5-6 2-8z" fill="#ff8a1f" />
        <path d="M13 0c5 2 10 7 10 13 0 4-2 7-5 9 1-5 1-10-3-13-2-2-3-5-2-9z" fill="#ffd43a" />
        <path d="M1 13c0 6 5 11 11 11 4 0 7-1.500 9-5-5 2-12 1-14-3-1-3-2-4-5-7-.7 1-1 2.500-1 4z" fill="#f5305a" />
        <circle cx="12" cy="13" r="5" fill="#7b4ddb" />
        <path d="M6 8c3-1 6 0 7 2-2 0-3 1-4 2z" fill="#ffb02a" />
      </>
    ),
  },
  {
    name: 'Creative Cloud',
    state: 'border-b-[#76b9ed]',
    icon: (
      <>
        <defs>
          <linearGradient id="ccGradient" x1="0" y1=".3" x2="1" y2=".9">
            <stop stopColor="#fb2b2b" />
            <stop offset=".55" stopColor="#ff7a1e" />
            <stop offset=".8" stopColor="#f6c02b" />
            <stop offset="1" stopColor="#74d13b" />
          </linearGradient>
        </defs>
        <rect x="1" y="1" width="22" height="22" rx="4" fill="url(#ccGradient)" />
        <path d="M5 1h14c2 0 4 2 4 4v6C17 7 9 5 3 2c.6-.6 1.200-1 2-1z" fill="#c23bd0" opacity=".6" />
        <path d="M14 1h5c2 0 4 2 4 4v5z" fill="#3b8cf0" opacity=".8" />
        <path d="M8 16.500a4 4 0 1 1 2-7.500l5 5M11 9a4.800 4.800 0 1 1 5 7.500H9.500M9 13.500l3 3M13 12a3 3 0 0 1 3-2" stroke="#fff" strokeWidth="1.5" />
      </>
    ),
  },
];

const SearchArt = () => (
  <svg width="84" height="40" viewBox="0 0 84 40" className="shrink-0" aria-hidden="true">
    <defs>
      <linearGradient id="artWater" x1="0" y1="0" x2="0" y2="1">
        <stop stopColor="#8fd0e4" />
        <stop offset="1" stopColor="#3fa6cb" />
      </linearGradient>
    </defs>
    <rect width="84" height="40" fill="#f2f2f2" />
    <path d="M10 12c-3-4 1-7 4-6 1-4 8-4 9-1 4-1 6 3 5 5 2 2 0 3-2 3H11z" fill="#f5c9c8" />
    <path d="M8 34C12 22 22 17 32 22l12-5 22-2 18 9v16H6z" fill="#d3a39c" />
    <path d="M54 24c6-11 12-10 18-5l12 6v5H54z" fill="#8a7ba6" />
    <path d="M16 40c0-12 14-19 34-19 14 0 26 0 34 2v17z" fill="url(#artWater)" />
    <path d="M3 40c1-8 4-12 10-12 8 0 10 4 12 12z" fill="#8c6a80" />
    <ellipse cx="46" cy="28" rx="15" ry="3.500" fill="#5f9a3f" />
    <path d="M35 15h6v3h9V9h6v4h6v13H36z" fill="#b79a80" />
    <path d="M34 16l4-5 4 5zM49 10l4-7 4 7zM56 14l4-5 4 5z" fill="#4a4a5c" />
    <path d="M61 23l23 8v6l-2-3-3-1-2 3-2-5-3-1-2 3-2-5-3-1-2 2-2-4z" fill="#c99f9c" />
    <path d="M40 20h2v3h-2zM53 14h2v4h-2z" fill="#5a4638" />
  </svg>
);

const Taskbar = () => (
  <footer className="flex h-10 shrink-0 bg-[#1f3038] text-[#f4f4f4]">
    <button aria-label="Start" className="flex w-12 items-center justify-center">
      <Svg w={17} h={16}><path d="M0 2.200l7.200-1V7.500H0zM8.200 1L17 0v7.500H8.200zM0 8.500h7.200v6.300l-7.200-1zM8.200 8.500H17V16l-8.800-1z" fill="#fff" /></Svg>
    </button>
    <label className="flex w-72 items-center border-y border-t-[#f2f2f2] border-b-[#b8b8b8] bg-[#f2f2f2] pl-3">
      <Svg w={17} h={18}>
        <circle cx="10.5" cy="6.5" r="5.5" stroke="#222" strokeWidth="1.4" />
        <path d="M6.500 10.500L1 17" stroke="#222" strokeWidth="1.4" />
      </Svg>
      <input placeholder="Type here to search" className="ml-[11px] w-40 flex-1 text-sm placeholder:text-[#333]" />
      <SearchArt />
    </label>
    <nav className="flex flex-1">
      {taskbarApps.map((app) => (
        <button key={app.name} aria-label={app.name} className="flex w-[49px] justify-center">
          <span className={`relative flex h-10 w-10 items-center justify-center border-y-2 border-t-transparent ${app.state || 'border-b-transparent'}`}>
            <Svg w={24} h={24}>{app.icon}</Svg>
            {app.badge && (
              <span className="absolute -right-0.5 bottom-0.5 flex h-4 w-4 items-center justify-center rounded-full border border-[#9a9a9a] bg-[#2b2f33] text-[11px] leading-none font-semibold">
                {app.badge}
              </span>
            )}
          </span>
        </button>
      ))}
      <button aria-label="Photoshop" className="ml-0.5 flex h-10 w-12 items-center justify-center border-y-2 border-t-[#4b5b61] border-b-[#76b9ed] bg-[#4b5b61]">
        <span className="flex h-[22px] w-[22px] items-center justify-center rounded bg-[#001e36] text-[11px] leading-none font-bold text-[#31a8ff]">Ps</span>
      </button>
    </nav>
    <div className="flex items-center text-[11px] leading-4">
      <Svg w={13} h={8}><path d="M1 7l5.500-5.500L12 7" stroke="#fff" strokeWidth="1.3" /></Svg>
      <Svg w={17} h={11} className="ml-2">
        <path d="M4 6c0-5 8-7 10 0z" fill="#b4b8ba" />
        <path d="M3.500 11C-1 10 0 5.500 4 6c1.500-3 6-2 7 .3 3-1 6 0 6 2.500 0 1.500-1 2.200-2 2.200z" fill="#fff" />
      </Svg>
      <Svg w={15} h={9} className="ml-2">
        <path d="M.5.5h12v8H.5z" stroke="#fff" />
        <path d="M2 2h4v5H2zM13 3h2v3h-2z" fill="#fff" />
      </Svg>
      <Svg w={14} h={14} className="ml-[10px]">
        <path d="M1 12C1.500 6 6 1.500 13 1M4 13c.5-5 4-8 9-8.500M7 13c.5-3 2.500-5 6-5.500" stroke="#fff" strokeWidth="1.2" />
        <path d="M10 10h3v3h-3z" fill="#fff" />
      </Svg>
      <Svg w={17} h={14} className="ml-2">
        <path d="M1 5h2.500L7 1.500v11L3.500 9H1z" stroke="#fff" />
        <path d="M9 5c1 1.200 1 2.800 0 4M11 3c2 2.500 2 5.500 0 8" stroke="#fff" />
        <path d="M13.500 1.500c3 3.500 3 7.500 0 11" stroke="#7d878c" />
      </Svg>
      <div className="ml-[10px] text-center">ENG<br />UK</div>
      <div className="ml-3 w-[60px] text-center">15:52<br />08/02/2023</div>
      <button aria-label="Notifications" className="relative ml-4 h-6 w-6">
        <Svg w={16} h={16}>
          <path d="M0 0h16v12H7l-3.500 3v-3H0z" fill="#fff" />
          <path d="M3 3.500h10M3 6h10M3 8.500h7" stroke="#1f3038" />
        </Svg>
        <span className="absolute right-0 -bottom-px flex h-4 w-4 items-center justify-center rounded-full border border-[#9a9a9a] bg-[#2b2f33] text-[10px] leading-none font-semibold">3</span>
      </button>
      <div className="mr-1 ml-3 h-full w-px bg-[#7d878c]" />
    </div>
  </footer>
);

export default function App() {
  return (
    <div className="flex h-screen flex-col overflow-hidden bg-[#323232] font-['Open_Sans','Noto_Sans',sans-serif]">
      <TitleBar />
      <OptionsBar />
      <div className="flex min-h-0 flex-1">
        <Toolbar />
        <Document />
        <RightDock />
      </div>
      <Taskbar />
    </div>
  );
}
